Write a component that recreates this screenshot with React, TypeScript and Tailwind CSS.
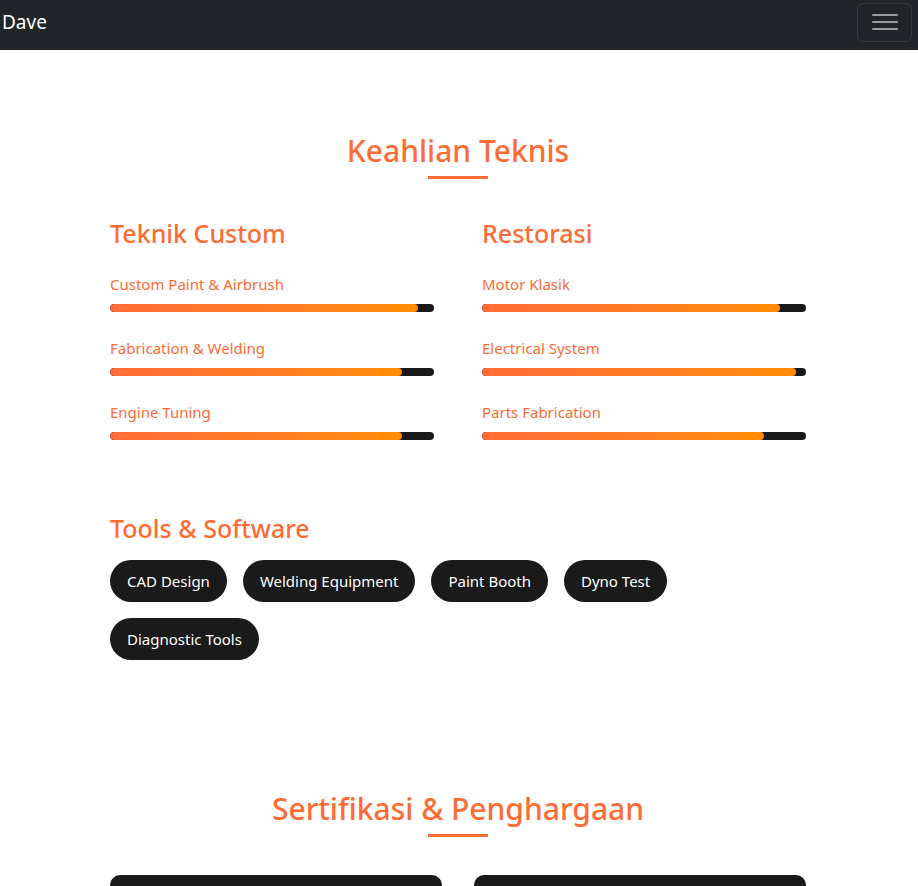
import React from "react";

const skills = {
  left: {
    title: "Teknik Custom",
    items: [
      { name: "Custom Paint & Airbrush", level: 95 },
      { name: "Fabrication & Welding", level: 90 },
      { name: "Engine Tuning", level: 90 },
    ],
  },
  right: {
    title: "Restorasi",
    items: [
      { name: "Motor Klasik", level: 92 },
      { name: "Electrical System", level: 97 },
      { name: "Parts Fabrication", level: 87 },
    ],
  },
};

const tools = ["CAD Design", "Welding Equipment", "Paint Booth", "Dyno Test", "Diagnostic Tools"];

const SectionTitle = ({ children }: { children: React.ReactNode }) => (
  <div className="flex flex-col items-center">
    <h2 className="text-[30px] leading-[38px] font-medium text-[#ff6b35]">{children}</h2>
    <div className="w-[60px] h-[3px] bg-[#ff6b35] mt-[6px]" />
  </div>
);

const SkillGroup = ({ group }: { group: { title: string; items: { name: string; level: number }[] } }) => (
  <div>
    <h3 className="text-[25px] leading-[34px] font-medium text-[#ff6b35] mb-[22px]">{group.title}</h3>
    <div className="flex flex-col gap-[24px]">
      {group.items.map((item) => (
        <div key={item.name}>
          <div className="text-[15px] leading-[24px] text-[#ff6b35] mb-[8px]">{item.name}</div>
          <div className="h-[8px] rounded-full bg-[#1a1a1a] overflow-hidden">
            <div
              className="h-full rounded-full bg-gradient-to-r from-[#ff6b35] to-[#ff8c00]"
              style={{ width: `${item.level}%` }}
            />
          </div>
        </div>
      ))}
    </div>
  </div>
);

export default function App() {
  return (
    <div className="min-h-screen bg-white font-['Segoe_UI','Noto_Sans',sans-serif]">
      {/* Navbar */}
      <nav className="h-[50px] bg-[#212529] flex items-center justify-between pl-[2px] pr-[6px]">
        <span className="text-white text-[19px] leading-[30px] -mt-[6px]">Dave</span>
        <button className="w-[55px] h-[39px] -mt-[6px] border border-white/10 rounded-[6px] flex items-center justify-center">
          <svg width="26" height="20" viewBox="0 0 26 20">
            <path d="M1 3h24M1 10h24M1 17h24" stroke="rgba(255,255,255,0.55)" strokeWidth="2" strokeLinecap="round" />
          </svg>
        </button>
      </nav>

      {/* Skills */}
      <section className="pt-[82px] pb-[80px]">
        <div className="w-[698px] pr-[2px] mx-auto">
          <SectionTitle>Keahlian Teknis</SectionTitle>
          <div className="grid grid-cols-2 gap-[48px] mt-[37px]">
            <SkillGroup group={skills.left} />
            <SkillGroup group={skills.right} />
          </div>

          <h3 className="text-[25px] leading-[34px] font-medium text-[#ff6b35] mt-[71px] mb-[15px]">Tools & Software</h3>
          <div className="flex flex-wrap gap-[16px]">
            {tools.map((t) => (
              <span key={t} className="h-[42px] px-[17px] rounded-full bg-[#1a1a1a] text-white text-[15px] flex items-center">
                {t}
              </span>
            ))}
          </div>
        </div>
      </section>

      {/* Certifications */}
      <section className="pt-[50px]">
        <div className="w-[698px] pr-[2px] mx-auto">
          <SectionTitle>Sertifikasi & Penghargaan</SectionTitle>
          <div className="grid grid-cols-2 gap-[32px] mt-[38px]">
            <div className="h-[200px] rounded-[10px] bg-[#1a1a1a]" />
            <div className="h-[200px] rounded-[10px] bg-[#1a1a1a]" />
          </div>
        </div>
      </section>
    </div>
  );
}
